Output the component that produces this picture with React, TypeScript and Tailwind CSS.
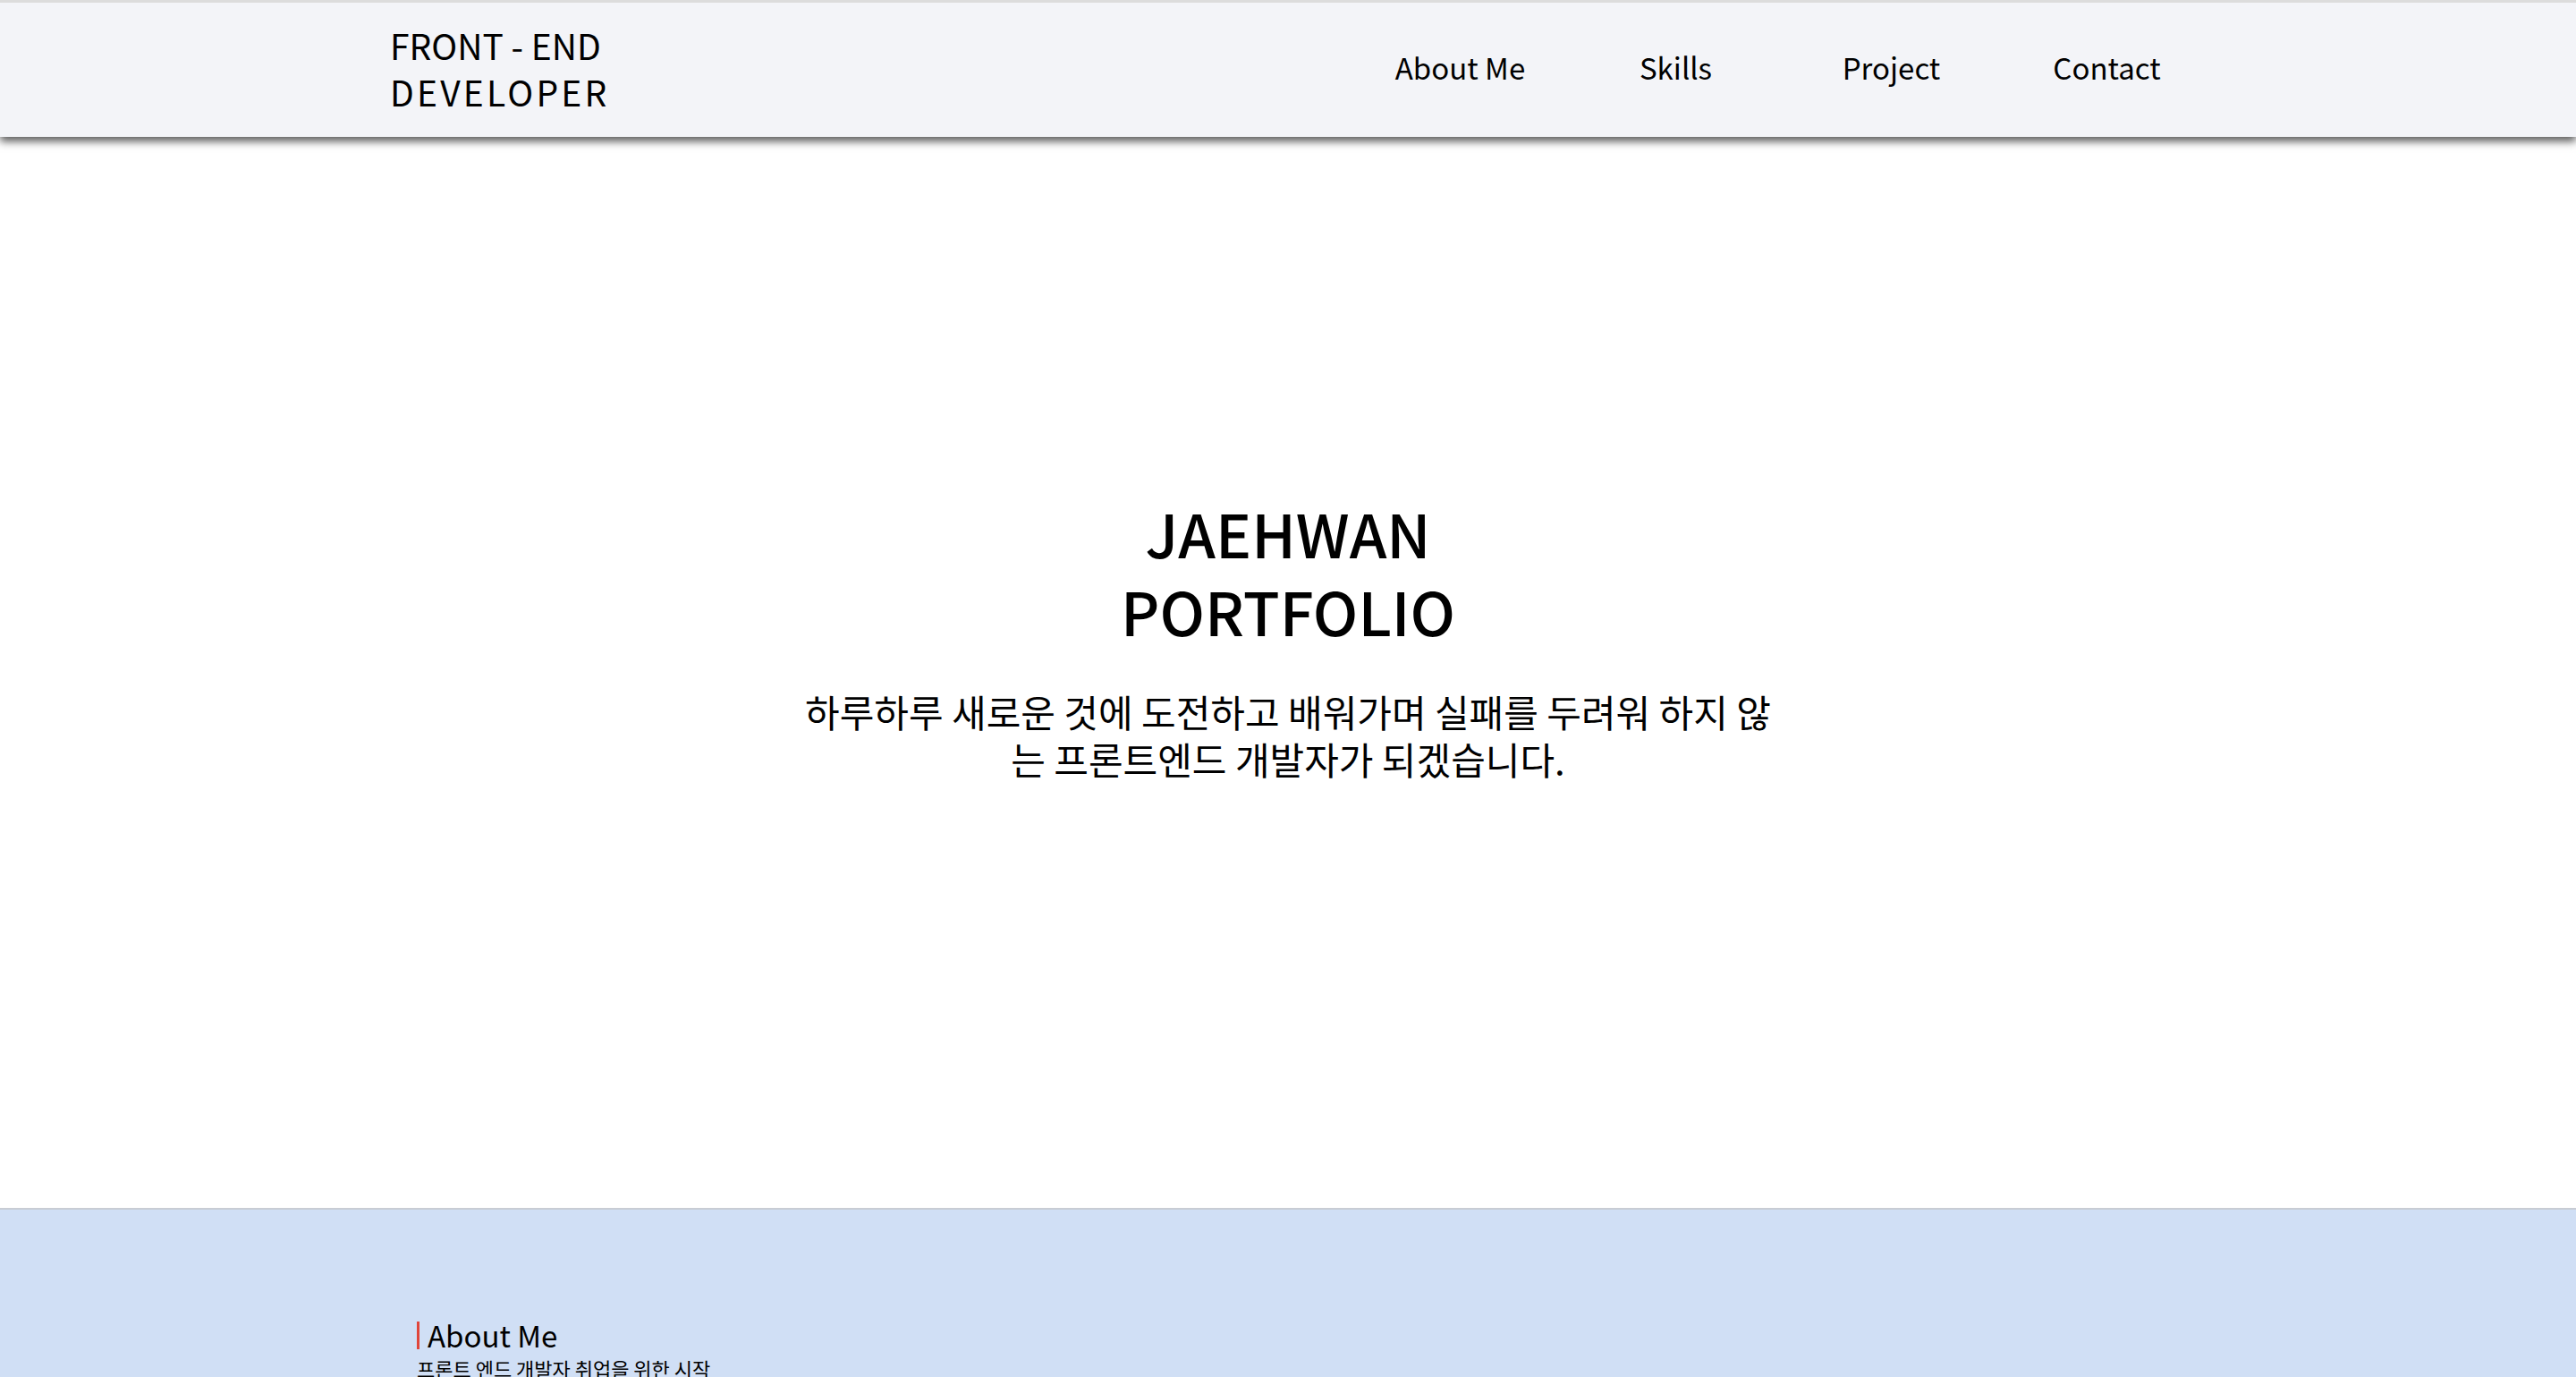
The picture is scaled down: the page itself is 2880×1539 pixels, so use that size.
import React from 'react';

const navItems = ['About Me', 'Skills', 'Project', 'Contact'];

function Header() {
  return (
    <header className="relative z-10 flex h-[153px] items-center border-t-[3px] border-[#dcdcdc] bg-[#f3f4f8] shadow-[0_5px_9px_rgba(0,0,0,0.65)]">
      <div className="-mt-[5px] pl-[436px] text-[39px] leading-[52px] text-black">
        <div>FRONT - END</div>
        <div className="tracking-[3.2px]">DEVELOPER</div>
      </div>
      <nav className="-mt-[5px] ml-auto mr-[404px] flex">
        {navItems.map((item) => (
          <a key={item} href="#" className="w-[241px] text-center text-[33px] text-black">
            {item}
          </a>
        ))}
      </nav>
    </header>
  );
}

function Hero() {
  return (
    <section className="flex h-[1197px] flex-col items-center bg-white pt-[398px]">
      <h1 className="text-center text-[67px] font-medium leading-[87px] text-black">
        JAEHWAN
        <br />
        PORTFOLIO
      </h1>
      <p className="mt-[43px] w-[1100px] text-center text-[42px] leading-[53px] text-black">
        하루하루 새로운 것에 도전하고 배워가며 실패를 두려워 하지 않는 프론트엔드 개발자가 되겠습니다.
      </p>
    </section>
  );
}

function AboutMe() {
  return (
    <section className="min-h-[700px] border-t-2 border-[#c8ccd4] bg-[#d0dff5] pl-[466px] pt-[118px]">
      <h2 className="flex items-center text-[33px] leading-[44px] text-black">
        <span className="mr-[9px] h-[31px] w-[3px] bg-[#e0453a]" />
        About Me
      </h2>
      <p className="text-[22px] leading-[30px] text-black">프론트 엔드 개발자 취업을 위한 시작</p>
    </section>
  );
}

export default function App() {
  return (
    <div className="min-h-screen bg-white font-['Noto_Sans_CJK_KR',sans-serif]">
      <Header />
      <Hero />
      <AboutMe />
    </div>
  );
}
